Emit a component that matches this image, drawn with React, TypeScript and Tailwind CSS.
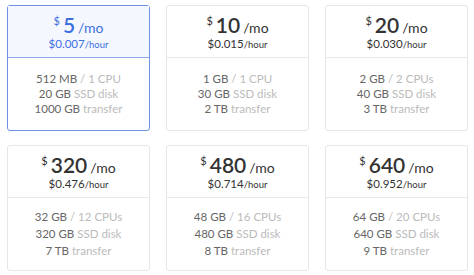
const plans = [
    { price: '5', hour: '$0.007', mem: '512 MB', cpu: '1 CPU', disk: '20 GB', transfer: '1000 GB', active: true },
    { price: '10', hour: '$0.015', mem: '1 GB', cpu: '1 CPU', disk: '30 GB', transfer: '2 TB' },
    { price: '20', hour: '$0.030', mem: '2 GB', cpu: '2 CPUs', disk: '40 GB', transfer: '3 TB' },
    { price: '320', hour: '$0.476', mem: '32 GB', cpu: '12 CPUs', disk: '320 GB', transfer: '7 TB', tall: true },
    { price: '480', hour: '$0.714', mem: '48 GB', cpu: '16 CPUs', disk: '480 GB', transfer: '8 TB', tall: true },
    { price: '640', hour: '$0.952', mem: '64 GB', cpu: '20 CPUs', disk: '640 GB', transfer: '9 TB', tall: true },
]

type Plan = (typeof plans)[number]

const PlanCard = ({ plan }: { plan: Plan }) => {
    const active = !!plan.active
    const line = plan.tall
        ? 'h-[17px] flex items-center whitespace-pre'
        : 'h-[15px] flex items-center whitespace-pre'
    return (
        <div
            className={
                active
                    ? 'h-[126px] flex flex-col border border-[#6e93e6] rounded-[3px] bg-white'
                    : 'h-[126px] flex flex-col border border-[#e6e6e6] rounded-[3px] bg-white'
            }
        >
            {/* Price */}
            <div
                className={
                    active
                        ? 'h-[52px] flex flex-col items-center justify-center bg-[#f4f8fe] border-b border-[#8aa8ea] text-[#3d6fe0]'
                        : 'h-[52px] flex flex-col items-center justify-center border-b border-[#e9e9e9] text-[#333]'
                }
            >
                <div className="flex items-baseline leading-none mt-[1px]">
                    <span className="text-[11px] self-start mt-[1px] mr-[3px]">$</span>
                    <span className="text-[21px] font-semibold">{plan.price}</span>
                    <span className="text-[14px] ml-[3px]">/mo</span>
                </div>
                <div className="leading-none mt-[3px] text-[11.5px]">
                    {plan.hour}
                    <span className="text-[9.5px]">/hour</span>
                </div>
            </div>

            {/* Specs */}
            <div className="flex-1 flex flex-col items-center justify-center text-[11.5px] text-[#666] pb-[1px]">
                <div className={line}>
                    {plan.mem} <span className="text-[#bbb]">/ {plan.cpu}</span>
                </div>
                <div className={line}>
                    {plan.disk} <span className="text-[#bbb]">SSD disk</span>
                </div>
                <div className={line}>
                    {plan.transfer} <span className="text-[#bbb]">transfer</span>
                </div>
            </div>
        </div>
    )
}

export default function App() {
    return (
        <div className="w-[474px] h-[275px] bg-white pl-[7px] pt-[5px] font-['Lato',sans-serif]">
            <div className="grid grid-cols-[143px_143px_143px] gap-x-[16px] gap-y-[14px]">
                {plans.map((p) => (
                    <PlanCard key={p.price} plan={p} />
                ))}
            </div>
        </div>
    )
}
